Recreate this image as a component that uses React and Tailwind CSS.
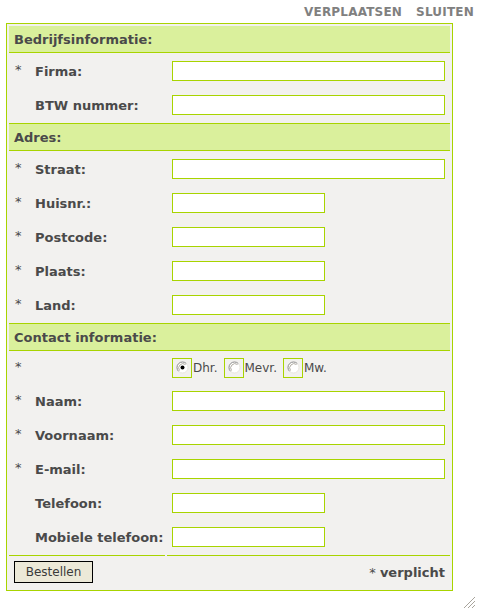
import React from "react";

const FONT = { fontFamily: '"DejaVu Sans", Verdana, sans-serif' };

function Radio({ checked, label }) {
  return (
    <div className="flex items-start">
      <div className="w-[20px] h-[20px] border border-[#a8d400] pl-[3px] pt-[2px]">
        <svg width="13" height="13" viewBox="0 0 13 13">
          <circle cx="6.5" cy="6.5" r="5.5" fill="#ffffff" />
          <path d="M10.4 2.6 A5.5 5.5 0 0 0 2.6 10.4" stroke="#8a8a8a" strokeWidth="1" fill="none" />
          <path d="M9.5 3.5 A4.3 4.3 0 0 0 3.5 9.5" stroke="#b0aca4" strokeWidth="1" fill="none" />
          <path d="M2.6 10.4 A5.5 5.5 0 0 0 10.4 2.6" stroke="#e8e6e0" strokeWidth="1" fill="none" />
          {checked && <circle cx="6.5" cy="6.5" r="2" fill="#000000" />}
        </svg>
      </div>
      <span className="text-[12px] leading-[20px] text-[#4a4a4a] ml-[1px] mr-[6px]">{label}</span>
    </div>
  );
}

function Row({ req, label, wide, h = "h-[32px]", children }) {
  return (
    <div className={`flex gap-[2px] ${h}`}>
      <div className="w-[156px] flex items-center pl-[6px]">
        <span className="w-[20px] text-[13px] text-[#4a4a4a] leading-none -mt-[4px]">{req ? "*" : ""}</span>
        <span className="text-[13px] font-bold text-[#4a4a4a] leading-none">{label}</span>
      </div>
      <div className="w-[283px] flex items-center pl-[5px]">
        {children ? (
          children
        ) : (
          <input
            className={`h-[20px] ${wide ? "w-[273px]" : "w-[153px]"} border border-[#a8d400] bg-white outline-none`}
          />
        )}
      </div>
    </div>
  );
}

function Header({ title, top }) {
  return (
    <div
      className={`h-[${top ? "28" : "27"}px] ${top ? "border-t" : ""} border-b border-[#a8d400] bg-[#daf09c] flex items-center pl-[5px]`}
    >
      <span className="text-[13px] font-bold text-[#4a4a4a] leading-none">{title}</span>
    </div>
  );
}

export default function App() {
  return (
    <div className="w-[479px] h-[612px] bg-white" style={FONT}>
      <div className="h-[23px] flex items-center justify-end pr-[5px] gap-[14px] text-[12px] font-bold text-[#808080] tracking-[0.2px]">
        <span>VERPLAATSEN</span>
        <span>SLUITEN</span>
      </div>
      <div className="ml-[6px] w-[447px] border border-[#a8d400] bg-[#f2f1ef] pt-[2px] pb-[2px] pl-[2px] pr-[2px] flex flex-col gap-[2px]">
        <div className="h-[27px] border-b border-[#a8d400] bg-[#daf09c] flex items-center pl-[5px]">
          <span className="text-[13px] font-bold text-[#4a4a4a] leading-none">Bedrijfsinformatie:</span>
        </div>
        <Row req label="Firma:" wide />
        <Row label="BTW nummer:" wide />
        <div className="h-[28px] border-t border-b border-[#a8d400] bg-[#daf09c] flex items-center pl-[5px]">
          <span className="text-[13px] font-bold text-[#4a4a4a] leading-none">Adres:</span>
        </div>
        <Row req label="Straat:" wide />
        <Row req label="Huisnr.:" />
        <Row req label="Postcode:" />
        <Row req label="Plaats:" />
        <Row req label="Land:" />
        <div className="h-[28px] border-t border-b border-[#a8d400] bg-[#daf09c] flex items-center pl-[5px]">
          <span className="text-[13px] font-bold text-[#4a4a4a] leading-none">Contact informatie:</span>
        </div>
        <Row req label="" h="h-[30px]">
          <div className="flex items-center">
            <Radio checked label="Dhr." />
            <Radio label="Mevr." />
            <Radio label="Mw." />
          </div>
        </Row>
        <Row req label="Naam:" wide />
        <Row req label="Voornaam:" wide />
        <Row req label="E-mail:" wide />
        <Row label="Telefoon:" />
        <Row label="Mobiele telefoon:" />
        <div className="flex gap-[2px] h-[33px]">
          <div className="w-[156px] border-t border-[#a8d400] flex items-center pl-[5px]">
            <button className="w-[79px] h-[22px] border border-black bg-[#ece9d8] text-[12px] text-[#3a3a3a] leading-none">
              Bestellen
            </button>
          </div>
          <div className="w-[283px] border-t border-[#a8d400] flex items-center justify-end pr-[5px]">
            <span className="text-[13px] text-[#4a4a4a] leading-none">
              * <span className="font-bold">verplicht</span>
            </span>
          </div>
        </div>
      </div>
      <div className="flex justify-end pr-[3px] mt-[5px]">
        <svg width="13" height="13" viewBox="0 0 13 13">
          <path d="M12 1 L1 12" stroke="#a8a49c" strokeWidth="1" />
          <path d="M12 2 L2 12" stroke="#ffffff" strokeWidth="1" />
          <path d="M12 5 L5 12" stroke="#a8a49c" strokeWidth="1" />
          <path d="M12 6 L6 12" stroke="#ffffff" strokeWidth="1" />
          <path d="M12 9 L9 12" stroke="#a8a49c" strokeWidth="1" />
        </svg>
      </div>
    </div>
  );
}
